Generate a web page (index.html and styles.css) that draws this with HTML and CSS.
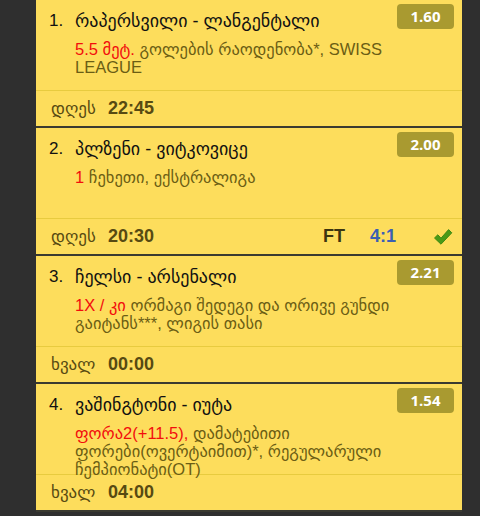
FILE: index.html
```html
<!DOCTYPE html>
<html lang="ka">
<head>
  <meta charset="UTF-8" />
  <meta name="viewport" content="width=device-width, initial-scale=1.0"/>
  <title>ბილეთი</title>
  <link rel="stylesheet" href="styles.css">
</head>
<body>

<div class="list">

  <div class="card">
    <div class="card-top">
      <span class="num">1.</span>
      <div class="info">
        <div class="teams">რაპერსვილი - ლანგენტალი</div>
        <div class="bet"><span class="pick">5.5 მეტ.</span> გოლების რაოდენობა*, SWISS LEAGUE</div>
      </div>
      <span class="odds">1.60</span>
    </div>
    <div class="card-foot">
      <span class="day">დღეს</span>
      <span class="time">22:45</span>
    </div>
  </div>

  <div class="card">
    <div class="card-top">
      <span class="num">2.</span>
      <div class="info">
        <div class="teams">პლზენი - ვიტკოვიცე</div>
        <div class="bet"><span class="pick">1</span> ჩეხეთი, ექსტრალიგა</div>
      </div>
      <span class="odds">2.00</span>
    </div>
    <div class="card-foot">
      <span class="day">დღეს</span>
      <span class="time">20:30</span>
      <div class="result">
        <span class="status">FT</span>
        <span class="score">4:1</span>
        <svg class="check" width="20" height="18" viewBox="0 0 20 18">
          <path d="M1.5 10 L4.8 6.8 L8 10.2 L15.6 1.6 L18.8 4.8 L8 16.2 Z" fill="#4a9a17" stroke="#3f8a12" stroke-width="1" stroke-linejoin="round"/>
        </svg>
      </div>
    </div>
  </div>

  <div class="card">
    <div class="card-top">
      <span class="num">3.</span>
      <div class="info">
        <div class="teams">ჩელსი - არსენალი</div>
        <div class="bet"><span class="pick">1X / კი</span> ორმაგი შედეგი და ორივე გუნდი გაიტანს***, ლიგის თასი</div>
      </div>
      <span class="odds">2.21</span>
    </div>
    <div class="card-foot">
      <span class="day">ხვალ</span>
      <span class="time">00:00</span>
    </div>
  </div>

  <div class="card">
    <div class="card-top">
      <span class="num">4.</span>
      <div class="info">
        <div class="teams">ვაშინგტონი - იუტა</div>
        <div class="bet"><span class="pick">ფორა2(+11.5),</span> დამატებითი ფორები(ოვერტაიმით)*, რეგულარული ჩემპიონატი(OT)</div>
      </div>
      <span class="odds">1.54</span>
    </div>
    <div class="card-foot">
      <span class="day">ხვალ</span>
      <span class="time">04:00</span>
    </div>
  </div>

</div>

</body>
</html>
```

FILE: styles.css
```css
body {
  margin: 0;
  background: #2f2f2f;
  font-family: "Liberation Sans", "DejaVu Sans", sans-serif;
}
.list {
  margin-left: 36px;
  width: 426px;
}
.card {
  background: #fddd5c;
  border-bottom: 2px solid #3a3a30;
}
.card-top {
  display: flex;
  align-items: flex-start;
  height: 91px;
  padding: 0 8px 0 13px;
  border-bottom: 1px solid #e8cb3f;
  box-sizing: border-box;
}
.num {
  width: 26px;
  flex-shrink: 0;
  padding-top: 10px;
  font-size: 17px;
  line-height: 22px;
  color: #111;
}
.info {
  flex: 1;
  padding-top: 10px;
  margin-right: 4px;
}
.teams {
  font-size: 18px;
  line-height: 22px;
  color: #111;
}
.bet {
  margin-top: 8px;
  font-size: 16.5px;
  line-height: 18px;
  color: #6b5d14;
}
.pick {
  color: #f20d0d;
}
.odds {
  width: 57px;
  height: 25px;
  margin-top: 4px;
  flex-shrink: 0;
  background: #a99a30;
  border-radius: 4px;
  color: #fff;
  font-family: "Open Sans", sans-serif;
  font-weight: bold;
  font-size: 15px;
  line-height: 25px;
  text-align: center;
}
.card-foot {
  display: flex;
  align-items: center;
  height: 35px;
  padding: 0 9px 0 15px;
  color: #574a12;
}
.day {
  width: 57px;
  font-size: 17px;
}
.time {
  font-size: 18px;
  font-weight: bold;
}
.result {
  display: flex;
  align-items: center;
  margin-left: auto;
}
.status {
  font-size: 18px;
  font-weight: bold;
  color: #3c3510;
}
.score {
  margin-left: 25px;
  font-size: 18px;
  font-weight: bold;
  color: #3b5fb3;
}
.check {
  margin-left: 37px;
}
```
